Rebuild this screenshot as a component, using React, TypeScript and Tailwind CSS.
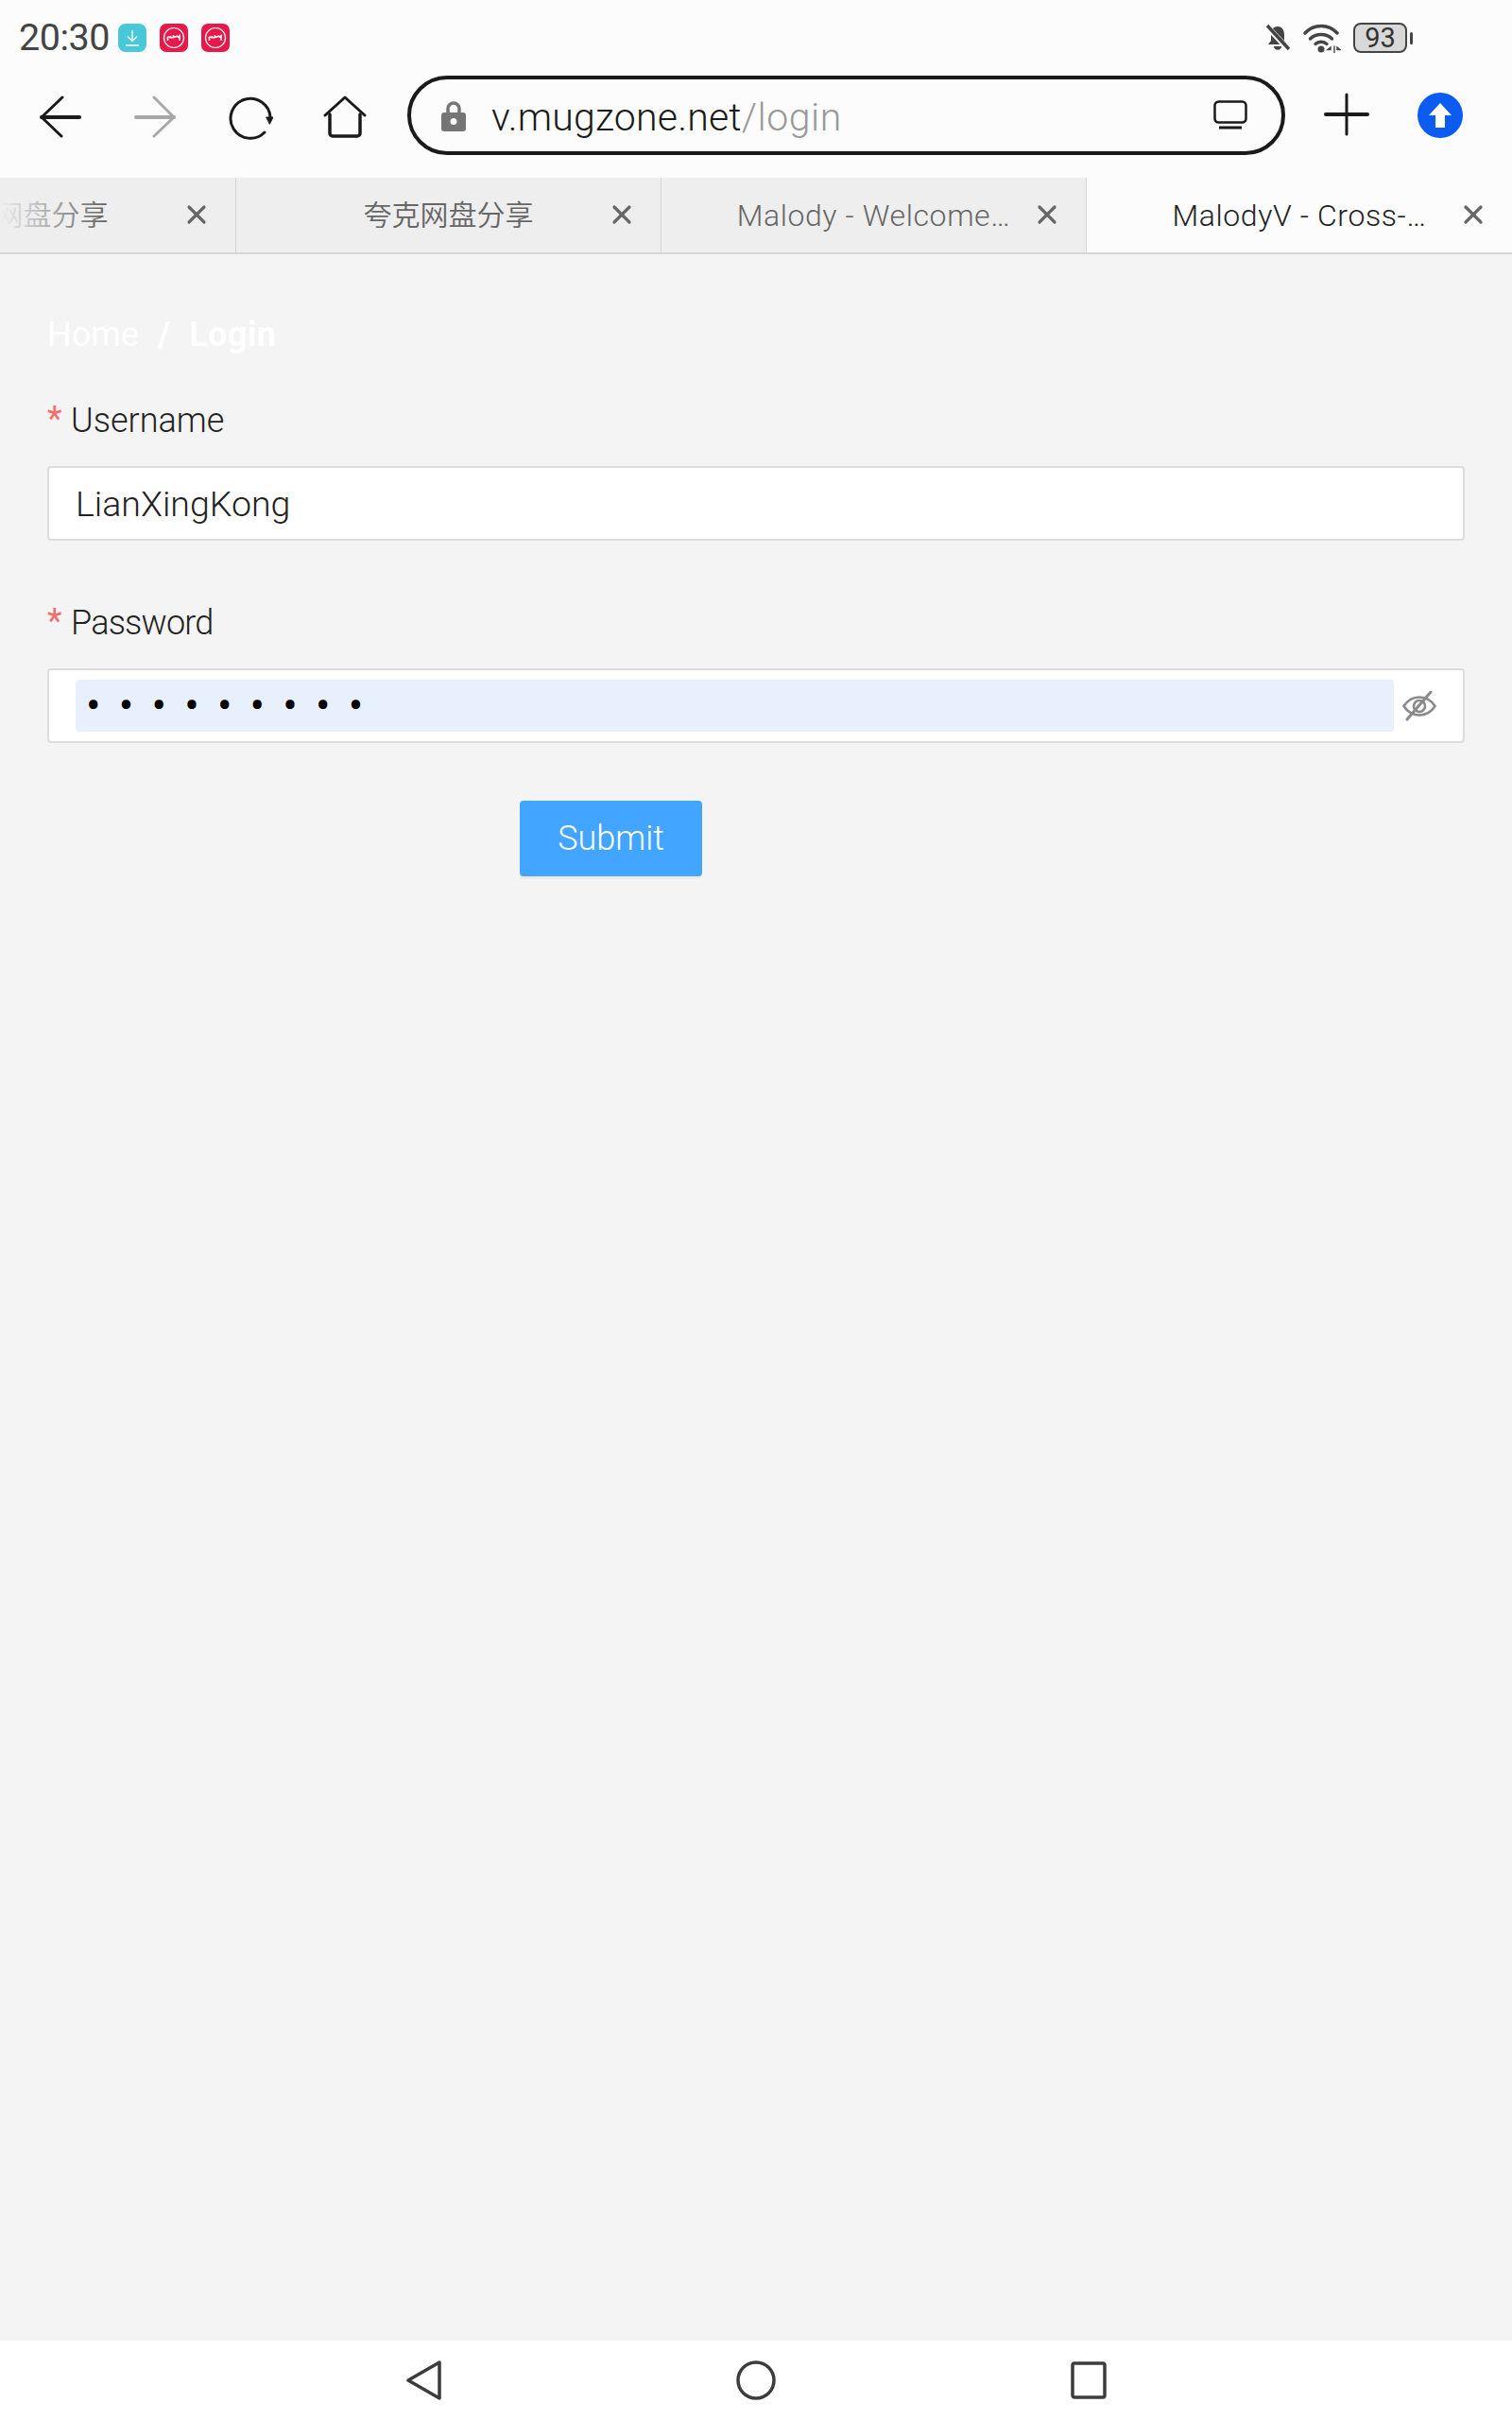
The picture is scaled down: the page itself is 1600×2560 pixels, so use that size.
import React from 'react';
import { X } from 'lucide-react';

const sans = "font-['Roboto','Noto_Sans_CJK_SC',sans-serif]";

const tabs = [
    { title: '夸克网盘分享', active: false, cjk: true },
    { title: '夸克网盘分享', active: false, cjk: true },
    { title: 'Malody - Welcome…', active: false, cjk: false },
    { title: 'MalodyV - Cross-…', active: true, cjk: false }
];

const NoteIcon: React.FC = () => (
    <div className="w-[30px] h-[30px] rounded-[7px] bg-[#e8194a] flex items-center justify-center">
        <svg width="24" height="24" viewBox="0 0 24 24" fill="none" stroke="#fff">
            <circle cx="12" cy="12" r="10.5" strokeWidth="1.2" />
            <path d="M5.5 15v-3.5l3-.6v1l3-.3v-1.4l1.5 1 2.5-1 1 1 1.500-1.400V15" strokeWidth="1.6" />
        </svg>
    </div>
);

const StatusBar: React.FC = () => (
    <div className="h-[75px] flex items-center justify-between pl-5 pr-[105px] pt-[5px]">
        <div className="flex items-center">
            <span className="text-[39.5px] font-normal leading-none text-[#444] tracking-[-0.5px] w-[105px]">20:30</span>
            <div className="flex gap-[14px]">
                <div className="w-[30px] h-[30px] rounded-[8px] bg-[#48c8d8] flex items-center justify-center">
                    <svg width="20" height="20" viewBox="0 0 20 20" fill="none" stroke="#fff" strokeWidth="1.3">
                        <path d="M10 2v11M5 8.500l5 5 5-5M3 18h14" />
                    </svg>
                </div>
                <NoteIcon />
                <NoteIcon />
            </div>
        </div>
        <div className="flex items-center">
            {/* muted bell */}
            <svg width="28" height="30" viewBox="0 0 28 30" fill="#444">
                <path d="M14 3c5 0 7 4 7 9v6l3 4H4l3-4v-6c0-5 2-9 7-9z" />
                <path d="M10 24h8c0 5-8 5-8 0z" />
                <path d="M2 2l24 26" stroke="#fcfcfc" strokeWidth="6" />
                <path d="M3 2l23 25" stroke="#444" strokeWidth="3.500" />
            </svg>
            {/* wifi */}
            <svg className="ml-[13px]" width="40" height="32" viewBox="0 0 40 32" fill="none" stroke="#444" strokeWidth="3.400" strokeLinecap="round">
                <path d="M2 11c9-10 25-10 34 0" />
                <path d="M7.500 17c6-6 17-6 23 0" />
                <path d="M13 22.500c3.500-3 8.500-3 12 0" />
                <circle cx="19" cy="28" r="3.500" fill="#444" stroke="none" />
                <path d="M29 26l-3 2.500h3zM33 25v7M36 26l3 2.500h-3z" fill="#444" strokeWidth="1.400" />
            </svg>
            {/* battery */}
            <div className="ml-[13px] w-[57px] h-[32px] rounded-[8px] border-[2.5px] border-[#444] bg-[#d8d8d8] flex items-center justify-center text-[29px] font-normal leading-none text-[#333]">
                93
            </div>
            <div className="ml-[3px] w-[3px] h-[13px] rounded-sm bg-[#444]" />
        </div>
    </div>
);

const ToolbarIcon: React.FC<{ children: React.ReactNode; color?: string }> = ({ children, color = '#1a1a1a' }) => (
    <svg width="48" height="48" viewBox="0 0 48 48" fill="none" stroke={color} strokeWidth="3" strokeLinecap="round" strokeLinejoin="round">
        {children}
    </svg>
);

const AddressRow: React.FC = () => (
    <div className="h-[113px] flex items-start pt-[5px] pl-[41px]">
        <div className="flex gap-[52px] pt-[21px] shrink-0 w-[390px]">
            <ToolbarIcon>
                <path d="M3 23h40" strokeWidth="4" />
                <path d="M25 2L3 23l21 20" />
            </ToolbarIcon>
            <ToolbarIcon color="#a8a8a8">
                <path d="M3 23h40" strokeWidth="4" />
                <path d="M22 2l21 21-21 20" />
            </ToolbarIcon>
            <ToolbarIcon>
                <path d="M39 39A21 21 0 1 1 45 23" />
                <path d="M41 23h7l-3.500 7z" fill="#1a1a1a" strokeWidth="1" />
            </ToolbarIcon>
            <ToolbarIcon>
                <path d="M3 21L24 2l21 19" />
                <path d="M8 20v20a3 3 0 0 0 3 3h26a3 3 0 0 0 3-3V20" strokeWidth="3.500" />
            </ToolbarIcon>
        </div>

        <div className="w-[929px] h-[84px] shrink-0 rounded-full border-[4.5px] border-[#1a1a1a] flex items-center pl-[32px] pr-[36px]">
            <svg width="26" height="33" viewBox="0 0 26 33" fill="#757575">
                <path d="M7 14V9a6 6 0 0 1 12 0v5" fill="none" stroke="#757575" strokeWidth="3.500" />
                <path fillRule="evenodd" d="M3 13h20a3 3 0 0 1 3 3v14a3 3 0 0 1-3 3H3a3 3 0 0 1-3-3V16a3 3 0 0 1 3-3zm10 6a3.500 3.500 0 1 0 0 7 3.500 3.500 0 0 0 0-7z" />
            </svg>
            <div className="ml-[27px] flex-1 pt-[5px] text-[41px] tracking-[0.2px] leading-none text-[#1a1a1a]">
                v.mugzone.net<span className="text-[#999] tracking-[0.5px]">/login</span>
            </div>
            <svg width="36" height="32" viewBox="0 0 36 32" fill="none" stroke="#1a1a1a" strokeWidth="2.500">
                <rect x="1.500" y="1.500" width="33" height="22" rx="4" />
                <path d="M6 29h24" strokeWidth="3" />
            </svg>
        </div>

        <div className="ml-[41px] mt-[18px]">
            <ToolbarIcon>
                <path d="M24 2v42" />
                <path d="M2 23h44" strokeWidth="4" />
            </ToolbarIcon>
        </div>
        <div className="ml-[51px] mt-[18px] w-[48px] h-[48px] rounded-full bg-[#0c5cf2] flex items-center justify-center">
            <svg width="26" height="28" viewBox="0 0 26 28" fill="#fff">
                <path d="M13 1l12 13h-7v13H8V14H1z" />
            </svg>
        </div>
    </div>
);

const TabStrip: React.FC = () => (
    <div className="relative h-[81px] overflow-hidden flex border-b-2 border-[#d6d6d6] shrink-0">
        {tabs.map((tab, i) => (
            <div
                key={i}
                className={`relative w-[450px] shrink-0 flex items-center justify-center leading-none ${tab.cjk ? 'text-[30px]' : 'text-[32px] tracking-[0.6px]'} ${i === 0 ? '-ml-[200px]' : ''} ${
                    tab.active ? 'bg-[#fcfcfc] text-[#222]' : 'bg-[#eeeeee] text-[#666] border-r border-[#d6d6d6]'
                }`}
            >
                {tab.title}
                <X className="absolute right-[25px] top-[23px] text-[#666]" size={32} strokeWidth={2.400} />
            </div>
        ))}
        <div className="absolute left-0 top-0 bottom-0 w-[110px] bg-gradient-to-r from-[#eeeeee] to-[#eeeeee]/0" />
    </div>
);

const Label: React.FC<{ text: string; tight?: boolean }> = ({ text, tight }) => (
    <div className={`flex items-center h-[40px] text-[36px] leading-none text-[#222] ${tight ? 'tracking-[-0.8px]' : ''}`}>
        <span className="text-[#f56c6c] font-normal w-[25px] -mt-[4px]">*</span>
        {text}
    </div>
);

const LoginForm: React.FC = () => (
    <div className="flex-1 bg-[#f4f4f4] px-[50px] pt-[65px]">
        <div className="flex items-center h-[40px] text-[36px] leading-none text-white">
            <span className="font-normal">Home</span>
            <span className="mx-[20px] font-bold">/</span>
            <span className="font-bold tracking-[0.4px]">Login</span>
        </div>

        <div className="mt-[51px]">
            <Label text="Username" />
            <input
                readOnly
                value="LianXingKong"
                className="mt-[28px] block w-full h-[79px] rounded-[4px] border-2 border-[#dcdcdc] bg-white px-[28px] text-[37.5px] text-[#222] outline-none"
            />
        </div>

        <div className="mt-[67px]">
            <Label text="Password" tight />
            <div className="mt-[28px] h-[79px] rounded-[4px] border-2 border-[#dcdcdc] bg-white flex items-center pl-[28px] pr-[28px]">
                <input
                    readOnly
                    type="password"
                    value="123456789"
                    className="flex-1 h-[55px] rounded-[4px] bg-[#e8f0fe] pl-[11px] text-[46px] font-normal tracking-[19.2px] text-black outline-none"
                />
                <svg className="ml-[9px] shrink-0" width="36" height="32" viewBox="0 0 36 32" fill="none" stroke="#8a8a8a" strokeWidth="2.600">
                    <path d="M1.500 16C6 9 11 6.500 18 6.500S30 9 34.500 16C30 23 25 25.500 18 25.500S6 23 1.500 16z" />
                    <circle cx="18" cy="16" r="6" />
                    <path d="M30 1L5 30" strokeWidth="3" strokeLinecap="round" />
                </svg>
            </div>
        </div>

        <button className="mt-[61px] ml-[500px] block w-[193px] h-[80px] rounded-[4px] bg-[#42a5ff] text-[36px] text-white shadow-[0_3px_0_#ebebeb]">
            Submit
        </button>
    </div>
);

const NavBar: React.FC = () => (
    <div className="h-[84px] bg-white shrink-0 flex items-start justify-center pt-[21px] gap-[312px]">
        <svg width="37" height="42" viewBox="0 0 37 42" fill="none" stroke="#3c3c3c" strokeWidth="3.500" strokeLinejoin="round">
            <path d="M35 2v38L2 21z" />
        </svg>
        <svg width="42" height="42" viewBox="0 0 42 42" fill="none" stroke="#3c3c3c" strokeWidth="3.500">
            <circle cx="21" cy="21" r="19" />
        </svg>
        <svg width="38" height="42" viewBox="0 0 38 42" fill="none" stroke="#3c3c3c" strokeWidth="3.500" strokeLinejoin="round">
            <rect x="2" y="3" width="34" height="36" rx="2" />
        </svg>
    </div>
);

export default function App() {
    return (
        <div className={`w-[1600px] h-[2560px] flex flex-col bg-[#fcfcfc] font-[350] ${sans}`}>
            <StatusBar />
            <AddressRow />
            <TabStrip />
            <LoginForm />
            <NavBar />
        </div>
    );
}
